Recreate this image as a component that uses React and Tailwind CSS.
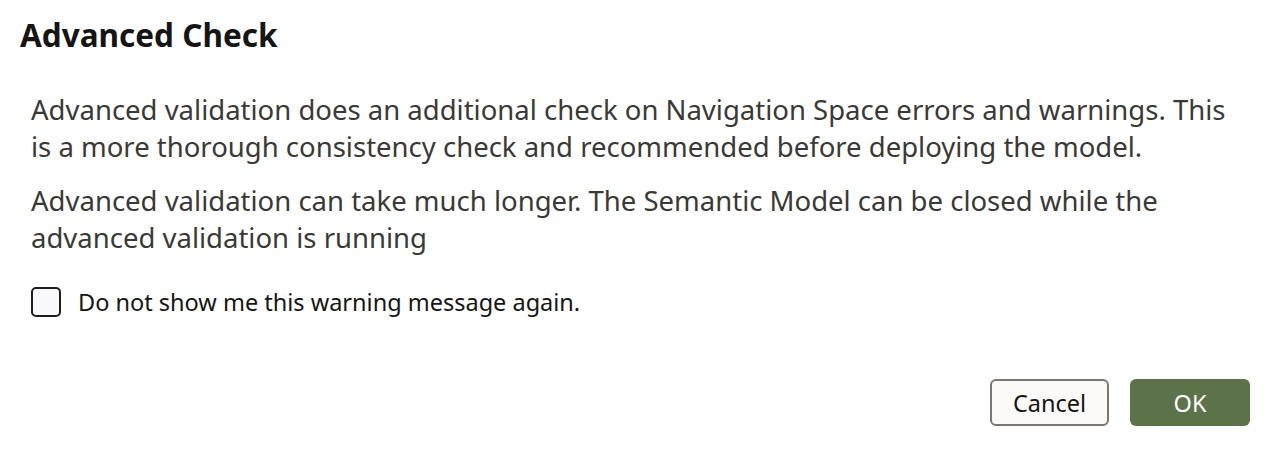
export default function App() {
  return (
    <div
      className="w-[1276px] h-[464px] bg-white flex flex-col overflow-hidden"
      style={{ fontFamily: '"Noto Sans", "Open Sans", sans-serif' }}
    >
      <div className="pl-[20px] pt-[15px]">
        <h1 className="text-[31.5px] leading-[40px] font-bold text-[#161513]">Advanced Check</h1>
      </div>
      <div className="pl-[31px] pr-[30px] pt-[36px] text-[27.5px] leading-[37px] text-[#3a3936]">
        <p>
          Advanced validation does an additional check on Navigation Space errors and warnings. This is a more thorough consistency check and recommended before deploying the model.
        </p>
        <p className="mt-[17px]">
          Advanced validation can take much longer. The Semantic Model can be closed while the advanced validation is running
        </p>
      </div>
      <label className="flex items-center gap-[17px] pl-[31px] mt-[31px]">
        <span className="w-[30px] h-[30px] rounded-[5px] border-2 border-[#1f1e1c] bg-[#f9f9fc]" />
        <span className="text-[23.5px] leading-[30px] text-[#161513]">Do not show me this warning message again.</span>
      </label>
      <div className="flex justify-end gap-[21px] pr-[26px] mt-[62px]">
        <button className="w-[119px] h-[47px] pt-[2px] rounded-[6px] border-2 border-[#7b7672] bg-[#fbfaf9] text-[23.5px] text-[#161513]">
          Cancel
        </button>
        <button className="w-[120px] h-[47px] pt-[2px] rounded-[6px] bg-[#5c7349] text-[23.5px] text-white">
          OK
        </button>
      </div>
    </div>
  );
}
